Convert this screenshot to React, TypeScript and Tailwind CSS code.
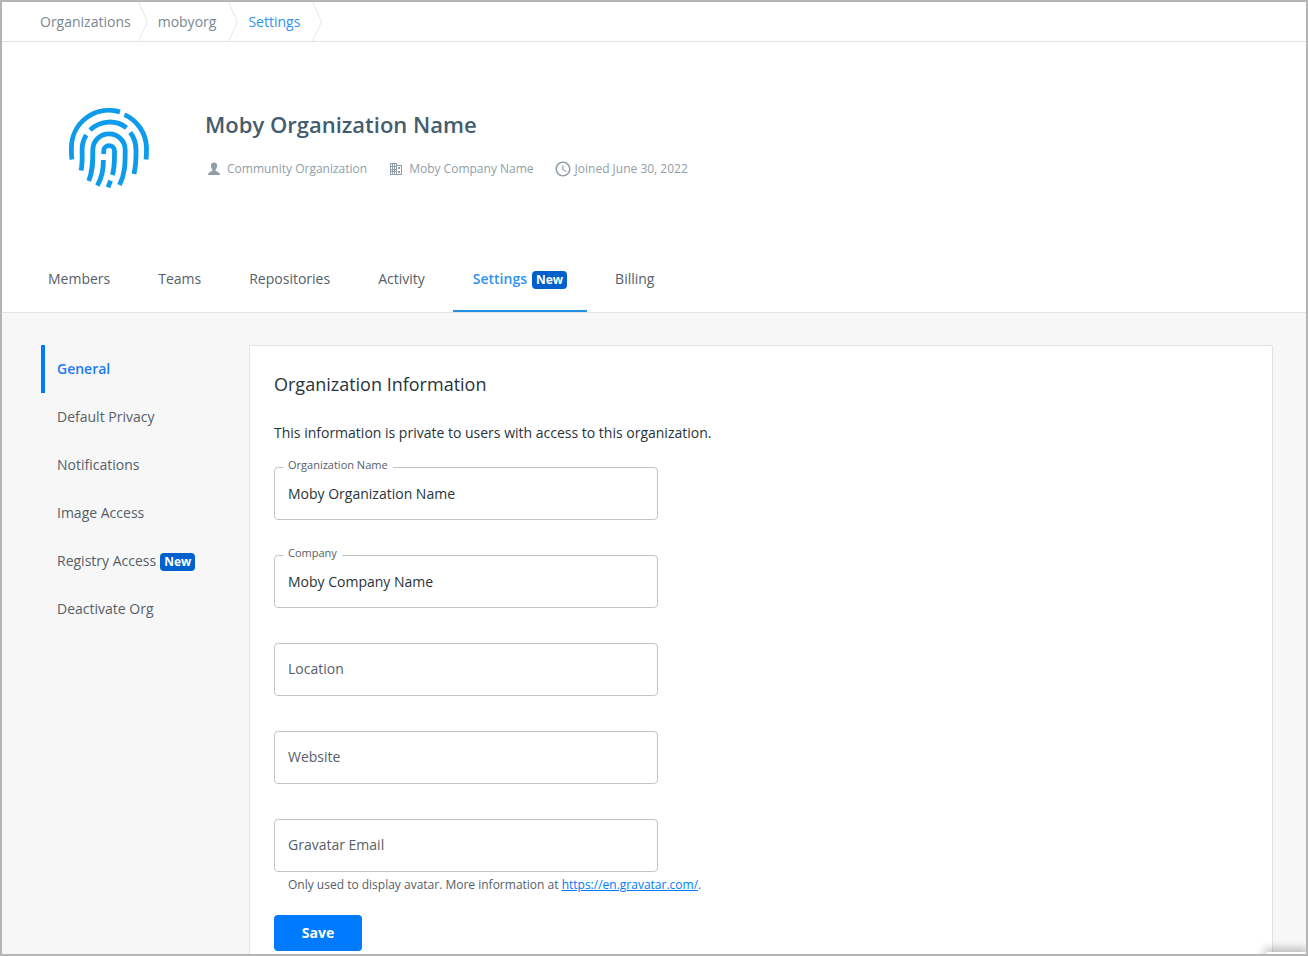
import { useId, useState } from "react";
import { MdAccessTime } from "react-icons/md";

function Fingerprint() {
  return (
    <svg viewBox="0 0 80 80" className="size-20 shrink-0" fill="none" stroke="#0f9bec" strokeWidth="4.8" strokeLinejoin="round" role="img" aria-label="Organization avatar">
      <path d="M3 51.5C2.4 48 2.4 44 2.4 40A37.5 37.5 0 0 1 51 4" />
      <path d="M55.5 6.6A37.5 37.5 0 0 1 77.5 40C77.5 44 77.5 47 77 51.5" />
      <path d="M21 22C31.5 12 47 11.5 57.5 19.8" />
      <path d="M17.3 27C14.2 32 13 37 13.1 42C13.3 50 13.6 56 12 62.5" />
      <path d="M61.2 24.6C65.5 30 67 36 67 42C67.2 51 66.8 58 65 66" />
      <path d="M19.8 73C23.3 64 24 57 23.8 42A16.2 16.2 0 0 1 56.2 42C56.2 57 56 66 50.5 77" />
      <path d="M34.7 46V43A5.4 5.4 0 0 1 45.5 43C45.5 53 45.8 59 43.4 67" />
      <path d="M34.4 52C34.5 62 32.8 70 28.3 77.6" />
      <path d="M41.6 72.6L39 79.3" />
    </svg>
  );
}

function PersonIcon() {
  return (
    <svg viewBox="0 0 18 18" className="size-4.5" fill="currentColor" aria-hidden="true">
      <path d="M9 2.500C6.800 2.500 5.700 4 5.900 6c.1 1.600.7 2.800 1.500 3.500v1.300C6.800 11.700 3.200 11.700 3 15h12c-.2-3.300-3.800-3.300-4.400-4.200V9.500c.8-.7 1.400-1.900 1.500-3.500.2-2-.9-3.500-3.100-3.500z" />
    </svg>
  );
}

function CompanyIcon() {
  return (
    <svg viewBox="0 0 18 18" className="size-4.5" fill="currentColor" fillRule="evenodd" aria-hidden="true">
      <path d="M3 3h7v2h5v10H3zM4 4v2h1V4zM6 4v2h1V4zM8 4v2h1V4zM4 7v2h1V7zM6 7v2h1V7zM8 7v2h1V7zM4 10v1h1v-1zM6 10v1h1v-1zM8 10v1h1v-1zM4 12v2h1v-2zM6 12v2h1v-2zM8 12v2h1v-2zM10 6v8h4V6zM11 7h2v2h-2zM11 11h2v2h-2z" />
    </svg>
  );
}

function NewBadge() {
  return <span className="mt-px flex h-4.5 items-center rounded bg-[#0060cc] px-1 text-xs font-bold text-white">New</span>;
}

const crumbs = ["Organizations", "mobyorg", "Settings"];
const tabs = ["Members", "Teams", "Repositories", "Activity", "Settings", "Billing"];
const sections = ["General", "Default Privacy", "Notifications", "Image Access", "Registry Access", "Deactivate Org"];

function Field({ label, initial = "", type = "text" }: { label: string; initial?: string; type?: string }) {
  const id = useId();
  const [value, setValue] = useState(initial);
  return (
    <div className="relative max-w-96">
      <input
        id={id}
        type={type}
        value={value}
        onChange={(e) => setValue(e.target.value)}
        className="h-[53px] w-full rounded border border-[#c4c4c4] bg-white px-[13px] text-sm text-[#27343b] outline-none focus:border-[#007bff]"
      />
      <label
        htmlFor={id}
        className={
          value
            ? "absolute -top-2.5 left-[9px] bg-white px-[5px] text-[11px] leading-4 text-[#556069]"
            : "absolute top-4 left-3.5 text-sm text-[#556069]"
        }
      >
        {label}
      </label>
    </div>
  );
}

export default function App() {
  return (
    <div className="relative flex min-h-screen flex-col overflow-hidden border-2 border-[#b5b5b5] bg-white font-['Open_Sans','Noto_Sans',sans-serif] text-sm text-[#556069]">
      <nav aria-label="Breadcrumb" className="border-b border-[#e1e2e6] pl-[38px]">
        <ol className="flex h-[39px] items-center">
          {crumbs.map((c, i) => (
            <li key={c} className={i === 0 ? "flex items-center gap-[7px]" : "flex items-center gap-3"}>
              <a href="#" className={c === "Settings" ? "text-[#2e93ee]" : "text-[#7a8791]"}>{c}</a>
              <svg viewBox="0 0 10 39" className="mr-2.5 h-[39px] w-2.5" fill="none" stroke="#e4e6e8" aria-hidden="true">
                <path d="M0.500 0L9.500 20L0.500 39" />
              </svg>
            </li>
          ))}
        </ol>
      </nav>

      <header className="border-b border-[#e1e2e6]">
        <div className="flex items-start gap-14 pt-[66px] pl-[67px]">
          <Fingerprint />
          <div>
            <h1 className="text-[22px] leading-8 font-semibold text-[#445d6e]">Moby Organization Name</h1>
            <ul className="mt-5 flex gap-5 text-xs leading-[18px] text-[#8f9ea8]">
              <li className="flex items-center gap-1"><PersonIcon />Community Organization</li>
              <li className="flex items-center gap-1"><CompanyIcon />Moby Company Name</li>
              <li className="flex items-center gap-[3px]"><MdAccessTime className="size-4.5" />Joined June 30, 2022</li>
            </ul>
          </div>
        </div>
        <nav aria-label="Organization" className="mt-14 flex gap-2 pl-[26px]">
          {tabs.map((t) => (
            <a
              key={t}
              href="#"
              className={
                t === "Settings"
                  ? "flex h-[68px] items-center gap-[5px] border-b-2 border-[#2391e6] px-5 pt-1 font-semibold text-[#2e93ee]"
                  : "flex h-[68px] items-center border-b-2 border-transparent px-5 pt-1"
              }
            >
              {t}
              {t === "Settings" && <NewBadge />}
            </a>
          ))}
        </nav>
      </header>

      <main className="flex grow gap-2 bg-[#f7f7f7] pt-8 pr-[33px] pl-[39px]">
        <nav aria-label="Settings" className="flex w-50 shrink-0 flex-col">
          {sections.map((s) => (
            <a
              key={s}
              href="#"
              className={
                s === "General"
                  ? "flex h-12 items-center border-l-4 border-[#007bff] pl-3 font-semibold text-[#1a7cf5]"
                  : "flex h-12 items-center gap-1 border-l-4 border-transparent pl-3"
              }
            >
              {s}
              {s === "Registry Access" && <NewBadge />}
            </a>
          ))}
        </nav>

        <section className="grow rounded-t-xs border border-b-0 border-[#e1e2e6] bg-white px-6 pt-6 pb-[3px] text-[#27343b]">
          <h2 className="text-lg leading-7">Organization Information</h2>
          <p className="mt-[25px] leading-5">This information is private to users with access to this organization.</p>
          <form className="mt-6" onSubmit={(e) => e.preventDefault()}>
            <div className="flex flex-col gap-[35px]">
              <Field label="Organization Name" initial="Moby Organization Name" />
              <Field label="Company" initial="Moby Company Name" />
              <Field label="Location" />
              <Field label="Website" />
              <Field label="Gravatar Email" type="email" />
            </div>
            <p className="mt-1 pl-3.5 text-xs leading-[18px] text-[#556069]">
              Only used to display avatar. More information at{" "}
              <a href="https://en.gravatar.com/" className="text-[#007bff] underline">https://en.gravatar.com/</a>.
            </p>
            <button type="submit" className="mt-[21px] h-9 w-22 rounded bg-[#007bff] font-bold text-white">Save</button>
          </form>
        </section>
      </main>

      {/* Top edge of the docked panel */}
      <div className="absolute right-0 bottom-0 h-0.5 w-10 rounded-tl bg-white shadow-[0_0_10px_2px_rgba(0,0,0,0.4)]" />
    </div>
  );
}
